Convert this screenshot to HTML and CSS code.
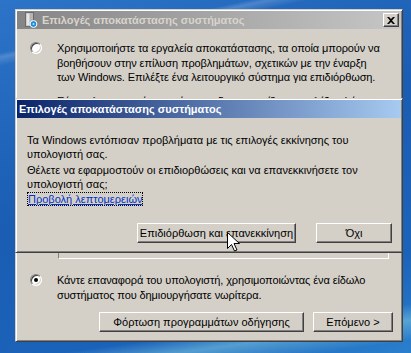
FILE: index.html
```html
<!DOCTYPE html>
<html lang="el">
<head>
    <meta charset="UTF-8">
    <title>Επιλογές αποκατάστασης συστήματος</title>
    <link rel="stylesheet" href="styles.css">
</head>
<body>
    <div class="desktop">
        <div class="window">
            <div class="titlebar inactive">
                <svg class="app-icon" width="16" height="16" viewBox="0 0 16 16">
                    <rect x="3.5" y="0.5" width="8" height="14" fill="#b4b4b4" stroke="#6c6c6c"/>
                    <rect x="4.5" y="1.5" width="3" height="12" fill="#e6e6e6"/>
                    <circle cx="11.5" cy="12" r="3.4" fill="#1f8ad6" stroke="#ffffff" stroke-width="1"/>
                    <circle cx="11.5" cy="12" r="1" fill="#bfe6ff"/>
                </svg>
                <span class="title">Επιλογές αποκατάστασης συστήματος</span>
                <button class="close">
                    <svg width="8" height="7" viewBox="0 0 8 7">
                        <path d="M0 0h2l2 2 2-2h2L5 3.5 8 7H6L4 5 2 7H0l3-3.5z" fill="#000"/>
                    </svg>
                </button>
            </div>
            <div class="window-body">
                <div class="option first">
                    <span class="radio"></span>
                    <p>Χρησιμοποιήστε τα εργαλεία αποκατάστασης, τα οποία μπορούν να<br>βοηθήσουν στην επίλυση προβλημάτων, σχετικών με την έναρξη<br>των Windows. Επιλέξτε ένα λειτουργικό σύστημα για επιδιόρθωση.</p>
                </div>
                <p class="hint">Εάν το λειτουργικό σας σύστημα δεν εμφανίζεται, επιλέξτε Φόρτωση</p>
                <div class="os-list"></div>
                <div class="option second">
                    <span class="radio checked"></span>
                    <p>Κάντε επαναφορά του υπολογιστή, χρησιμοποιώντας ένα είδωλο<br>συστήματος που δημιουργήσατε νωρίτερα.</p>
                </div>
                <div class="buttons">
                    <button class="btn load">Φόρτωση προγραμμάτων οδήγησης</button>
                    <button class="btn next">Επόμενο &gt;</button>
                </div>
            </div>
        </div>

        <div class="dialog">
            <div class="titlebar active">
                <span class="title">Επιλογές αποκατάστασης συστήματος</span>
            </div>
            <div class="dialog-body">
                <p>Τα Windows εντόπισαν προβλήματα με τις επιλογές εκκίνησης του<br>υπολογιστή σας.</p>
                <p class="question">Θέλετε να εφαρμοστούν οι επιδιορθώσεις και να επανεκκινήσετε τον<br>υπολογιστή σας;</p>
                <a class="details" href="#">Προβολή λεπτομερειών</a>
                <div class="buttons dialog-buttons">
                    <button class="btn repair">Επιδιόρθωση και επανεκκίνηση</button>
                    <button class="btn no">Όχι</button>
                </div>
            </div>
        </div>

        <svg class="cursor" width="13" height="20" viewBox="0 0 13 20">
            <path d="M0.5 0.5V16.5L4.5 12.5L7.5 19L10 18L7 11.5H12.5Z" fill="#fff" stroke="#000" stroke-width="1" stroke-linejoin="miter"/>
        </svg>
    </div>
</body>
</html>
```

FILE: styles.css
```css
* { box-sizing: border-box; }
body { margin: 0; font-family: 'Liberation Sans', Arial, sans-serif; font-size: 11px; color: #000; }
p { margin: 0; }

.desktop { position: relative; width: 411px; height: 353px; overflow: hidden; padding: 9px 0 0 15px;
    background:
        linear-gradient(168deg, transparent 0 12%, rgba(255,255,255,0.18) 13%, transparent 15%),
        linear-gradient(172deg, transparent 0 88%, rgba(150,220,230,0.45) 92%, transparent 97%),
        linear-gradient(160deg, #2d74c8 0%, #1a5db3 45%, #1b63ba 80%, #2a7fcc 100%); }

/* classic windows frame */
.window, .dialog { width: 388px; background: #d4d0c8; border: 1px solid; border-color: #d4d0c8 #404040 #404040 #d4d0c8;
    box-shadow: inset 1px 1px #fff, inset -1px -1px #808080; padding: 1px; }
.window { height: 333px; }
.dialog { position: absolute; left: 15px; top: 98px; height: 155px; }

.titlebar { height: 18px; display: flex; align-items: center; padding: 0 2px 0 5px; font-weight: bold; }
.titlebar.inactive { background: linear-gradient(90deg, #858585, #c6c6c6); color: #d8d4cc; }
.titlebar.active { background: linear-gradient(90deg, #0a246a, #a6caf0); color: #fff; padding-left: 2px; }
.app-icon { margin-right: 4px; }
.title { flex: 1; white-space: nowrap; }

.close { width: 16px; height: 14px; padding: 0; display: flex; align-items: center; justify-content: center;
    background: #d4d0c8; border: 1px solid; border-color: #fff #404040 #404040 #fff; box-shadow: inset -1px -1px #808080; }

.window-body { padding: 0 8px 0 13px; }
.option { display: flex; align-items: flex-start; line-height: 14.5px; white-space: nowrap; letter-spacing: -0.1px; }
.option.first { margin-top: 12px; }
.option.second { margin-top: 14px; }
.radio { position: relative; width: 12px; height: 12px; margin: 1px 15px 0 0; flex: none; border-radius: 50%; background: #fff;
    border: 1px solid; border-color: #808080 #fff #fff #808080; box-shadow: inset 1px 1px #404040, inset -1px -1px #d4d0c8; }
.radio.checked::after { content: ""; position: absolute; left: 3px; top: 3px; width: 4px; height: 4px; border-radius: 50%; background: #000; }

.hint { margin: 9px 0 0 27px; line-height: 14.5px; white-space: nowrap; }
.os-list { margin: 2px 4px 0 28px; height: 149px; border: 1px solid; border-color: #808080 #fff #fff #808080; }

.buttons { display: flex; justify-content: flex-end; gap: 9px; margin-top: 10px; }
.btn { height: 20px; padding: 0; font-family: inherit; font-size: 11px; color: #000; background: #d4d0c8;
    border: 1px solid; border-color: #fff #404040 #404040 #fff; box-shadow: inset -1px -1px #808080; }
.btn.load { width: 205px; }
.btn.next { width: 80px; }

.dialog-body { padding: 15px 9px 0 10px; line-height: 14px; white-space: nowrap; }
.question { margin-top: 2px; }
.details { display: inline-block; margin-top: 1px; color: #0033cc; text-decoration: underline; outline: 1px dotted #000; outline-offset: -1px; padding: 0 1px; }
.dialog-buttons { gap: 20px; margin-top: 17px; }
.btn.repair { width: 159px; }
.btn.no { width: 76px; }

.cursor { position: absolute; left: 227px; top: 232px; }
```
